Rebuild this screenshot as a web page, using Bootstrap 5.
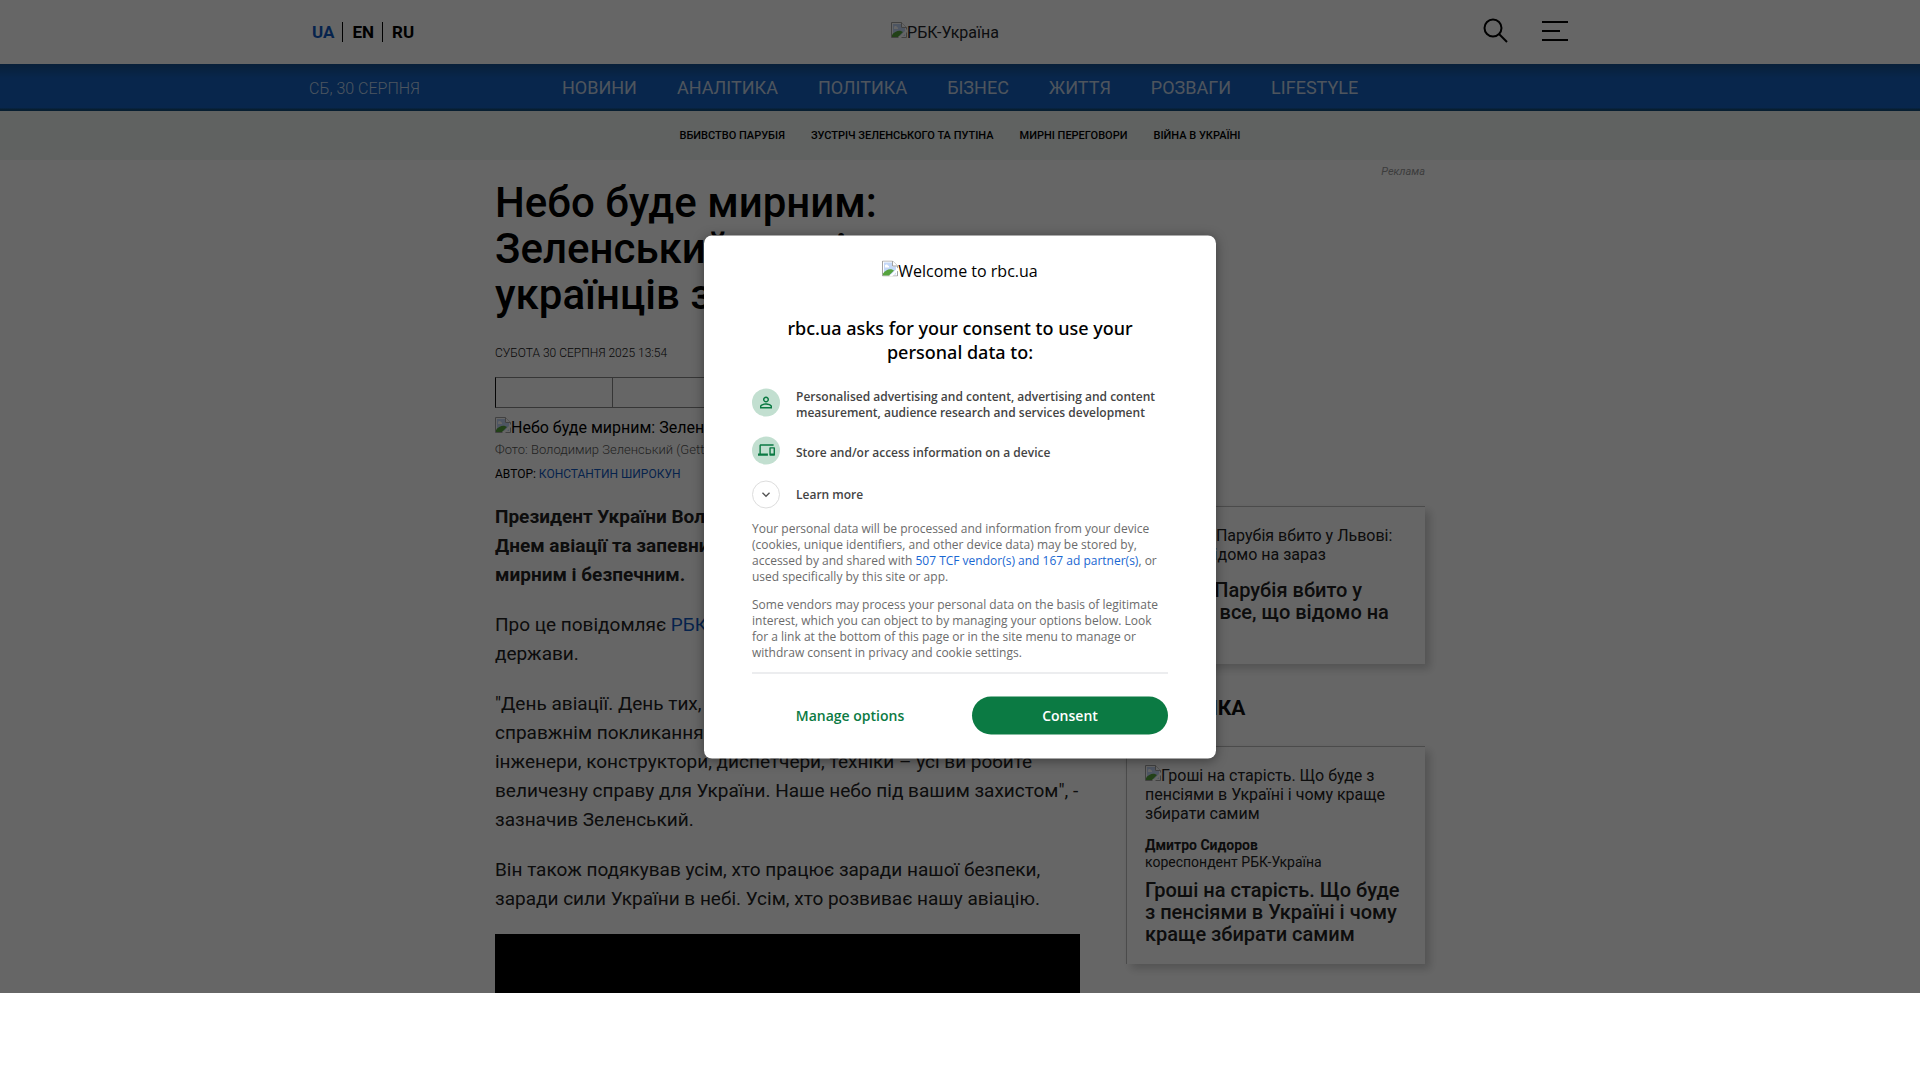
<!DOCTYPE html>
<html lang="uk">
<head>
<meta charset="utf-8">
<meta name="viewport" content="width=device-width, initial-scale=1">
<title>РБК-Україна</title>
<link rel="stylesheet" href="https://cdn.jsdelivr.net/npm/bootstrap@5.3.0/dist/css/bootstrap.min.css">
<style>
  body { font-family: Roboto, sans-serif; color: #000; line-height: 19px; }
  a { text-decoration: none; }
  .site { height: calc(100vh - 87px); overflow: hidden; background: #fff; }
  .shade { position: absolute; inset: 0; background: rgba(0, 0, 0, .6); }
  .wrap { max-width: 1302px; margin: 0 auto; }
  .topbar { height: 64px; padding-right: 30px; grid-template-columns: 1fr auto 1fr; }
  .langs a { font-size: 17px; font-weight: 700; line-height: 20px; color: #000; padding: 0 8px 0 9px; border-left: 1px solid #000; }
  .langs a:first-child { color: #1059c0; border-left: 0; padding-left: 3px; }
  .tools { gap: 34px; padding: 0 13px 3px 0; }
  .plain-btn { background: none; border: 0; padding: 0; }
  .plain-btn svg { display: block; }
  .broken { width: 16px; height: 16px; display: inline-block; vertical-align: baseline; }
  .mainbar { background: linear-gradient(#16508f, #1560bd 14px, #1560bd 44px, #124d7c 45px); height: 47px; }
  .mainbar a { color: #c4d4e8; font-size: 18px; }
  .mainbar nav { gap: 40px; }
  .today { font-size: 16px; font-weight: 300; width: 253px; color: #bfd4ee; padding-top: 1px; }
  .subbar { background: #eff5f3; height: 49px; gap: 26px; }
  .subbar a { color: #000; font-size: 11px; font-weight: 500; }
  .page-cols { max-width: 930px; margin: 0 auto; }
  .story { width: 585px; }
  .story h1 { font-size: 42px; line-height: 46px; font-weight: 500; max-width: 440px; margin: 20px 0 0; }
  .stamp { font-size: 12px; line-height: 16px; color: #111; margin-top: 27px; font-weight: 300; }
  .share { height: 31px; border: 1px solid #888; border-left-color: #111; margin-top: 16px; }
  .share > span { width: 117px; border-right: 1px solid #888; }
  .photo-alt { margin-top: 9px; }
  .photo-note { font-size: 13px; line-height: 16px; font-weight: 300; color: #555; margin-top: 5px; }
  .author { font-size: 12px; line-height: 16px; margin-top: 8px; }
  .author a, .article-text a { color: #1059c0; }
  .article-text { font-size: 19px; line-height: 29px; color: #222; margin-top: 20px; }
  .article-text p { margin: 0 0 21px; }
  .video { height: 330px; background: #000; }
  .side { width: 299px; }
  .promo { color: #999; font-size: 11px; line-height: 16px; font-style: italic; height: 346px; padding-top: 4px; }
  .tile { border: 1px solid #bbb; border-right: 0; border-bottom: 0; box-shadow: 5px 5px 8px rgba(0, 0, 0, .18); padding: 18px 18px 19px; color: #222; }
  .tile h3 { font-size: 20px; line-height: 22px; font-weight: 500; margin: 15px 0 0; }
  .byline { font-size: 14px; line-height: 17px; margin-top: 14px; }
  .byline + h3 { margin-top: 8px; }
  .side h2 { font-size: 21px; line-height: 24px; font-weight: 700; margin: 32px 0 26px; color: #111; }
  .consent { position: absolute; left: 50%; top: 50%; transform: translate(-50%, -50%); width: 512px; background: #fff; border-radius: 8px; padding: 25px 48px 24px; font-family: "Open Sans", sans-serif; box-shadow: 0 2px 12px rgba(0, 0, 0, .4); }
  .consent h2 { font-family: "Noto Sans", "Open Sans", sans-serif; font-size: 18px; line-height: 24px; font-weight: 500; margin: 35px 20px 25px; }
  .purposes { gap: 16px; margin-bottom: 12px; }
  .purposes li, .more { font-size: 12px; line-height: 16px; font-weight: 600; color: #444; gap: 16px; }
  .disc { width: 28px; height: 28px; border-radius: 50%; background: #c2dfd0; flex: none; }
  .disc.hollow { background: #fff; border: 1px solid #ddd; }
  .terms { font-size: 12px; line-height: 16px; color: #6b6b6b; }
  .terms p { margin: 0 0 12px; }
  .terms a { color: #1967d2; }
  .acts { border-top: 1px solid #dadce0; padding-top: 23px; gap: 24px; }
  .acts .btn { flex: 1 1 0; height: 38px; border: 0; border-radius: 19px; font-size: 14px; line-height: 20px; font-weight: 600; padding: 0; }
  .btn-manage { color: #0b7a43; }
  .btn-agree, .btn-agree:hover { color: #fff; background: #0b7a43; }
</style>
<script src="https://cdn.jsdelivr.net/npm/bootstrap@5.3.0/dist/js/bootstrap.bundle.min.js"></script>
</head>
<body>
<svg class="d-none">
  <symbol id="broken" viewBox="0 0 16 16">
    <path d="M.5.5h10l5 5v10H.5z" fill="#fff" stroke="#a3a3a3"/>
    <path d="M2 2h8v4h4v8H2z" fill="#c3d7f7"/>
    <path d="M3 6a1.500 1.500 0 0 1 3-1 1.500 1.500 0 0 1 1 2H3z" fill="#fff"/>
    <path d="M1 15v-2c2-3 6-5 9-4l2 1-5 5z" fill="#56a33e"/>
    <path d="M7 16 16 7v3L10 16z" fill="#fff"/>
    <path d="M10.500.5v5h5" fill="#fff" stroke="#a3a3a3"/>
  </symbol>
</svg>
<div class="site position-relative">
  <header>
    <div class="wrap topbar d-grid align-items-center">
      <nav class="langs d-flex" aria-label="Мова"><a href="#">UA</a><a href="#">EN</a><a href="#">RU</a></nav>
      <a href="#" class="text-body"><svg class="broken"><use href="#broken"/></svg>РБК-Україна</a>
      <div class="tools d-flex align-items-center justify-content-end">
        <button class="plain-btn" aria-label="Пошук"><svg width="25" height="25" viewBox="0 0 25 25" fill="none" stroke="#000" stroke-width="2"><circle cx="10" cy="10" r="8.500"/><path d="m16 16 8 8"/></svg></button>
        <button class="plain-btn" aria-label="Меню"><svg width="26" height="20" viewBox="0 0 26 20" stroke="#000" stroke-width="2"><path d="M0 1h26M0 10h18M0 19h26"/></svg></button>
      </div>
    </div>
    <div class="mainbar">
      <div class="wrap d-flex align-items-center h-100">
        <span class="today">СБ, 30 СЕРПНЯ</span>
        <nav class="d-flex" aria-label="Розділи"><a href="#">НОВИНИ</a><a href="#">АНАЛІТИКА</a><a href="#">ПОЛІТИКА</a><a href="#">БІЗНЕС</a><a href="#">ЖИТТЯ</a><a href="#">РОЗВАГИ</a><a href="#">LIFESTYLE</a></nav>
      </div>
    </div>
    <nav class="subbar d-flex align-items-center justify-content-center" aria-label="Теми"><a href="#">ВБИВСТВО ПАРУБІЯ</a><a href="#">ЗУСТРІЧ ЗЕЛЕНСЬКОГО ТА ПУТІНА</a><a href="#">МИРНІ ПЕРЕГОВОРИ</a><a href="#">ВІЙНА В УКРАЇНІ</a></nav>
  </header>
  <main class="page-cols d-flex justify-content-between">
    <article class="story">
      <h1>Небо буде мирним: Зеленський привітав українців з</h1>
      <div class="stamp">СУБОТА 30 СЕРПНЯ 2025 13:54</div>
      <div class="share d-flex"><span></span><span></span><span></span><span></span></div>
      <div class="photo-alt"><svg class="broken"><use href="#broken"/></svg>Небо буде мирним: Зеленс</div>
      <div class="photo-note">Фото: Володимир Зеленський (Getty</div>
      <div class="author">АВТОР: <a href="#">КОНСТАНТИН ШИРОКУН</a></div>
      <div class="article-text">
        <p class="fw-bold">Президент України Волод<br>Днем авіації та запевнив<br>мирним і безпечним.</p>
        <p>Про це повідомляє <a href="#">РБК-</a><br>держави.</p>
        <p>"День авіації. День тих,<br>справжнім покликанням<br>інженери, конструктори, диспетчери, техніки – усі ви робите величезну справу для України. Наше небо під вашим захистом", - зазначив Зеленський.</p>
        <p>Він також подякував усім, хто працює заради нашої безпеки, заради сили України в небі. Усім, хто розвиває нашу авіацію.</p>
        <div class="video"></div>
      </div>
    </article>
    <aside class="side">
      <div class="promo text-end">Реклама</div>
      <div class="tile">
        <div><svg class="broken"><use href="#broken"/></svg>Андрія Парубія вбито у Львові: все, що відомо на зараз</div>
        <h3>Андрія Парубія вбито у Львові: все, що відомо на зараз</h3>
      </div>
      <h2>АНАЛІТИКА</h2>
      <div class="tile">
        <div><svg class="broken"><use href="#broken"/></svg>Гроші на старість. Що буде з пенсіями в Україні і чому краще збирати самим</div>
        <div class="byline"><strong class="fw-bold d-block">Дмитро Сидоров</strong>кореспондент РБК-Україна</div>
        <h3>Гроші на старість. Що буде з пенсіями в Україні і чому краще збирати самим</h3>
      </div>
    </aside>
  </main>
  <div class="shade"></div>
  <section class="consent" role="dialog" aria-labelledby="ask">
    <div class="text-center"><svg class="broken"><use href="#broken"/></svg>Welcome to rbc.ua</div>
    <h2 id="ask" class="text-center">rbc.ua asks for your consent to use your personal data to:</h2>
    <ul class="purposes list-unstyled d-flex flex-column">
      <li class="d-flex">
        <span class="disc d-flex align-items-center justify-content-center"><svg width="18" height="18" viewBox="0 0 24 24" fill="#0b7a43"><path d="M12 5.900a2.100 2.100 0 1 1 0 4.200 2.100 2.100 0 0 1 0-4.200m0 9c2.970 0 6.100 1.460 6.100 2.100v1.100H5.900V17c0-.64 3.130-2.100 6.100-2.100M12 4C9.790 4 8 5.790 8 8s1.790 4 4 4 4-1.790 4-4-1.790-4-4-4zm0 9c-2.670 0-8 1.340-8 4v3h16v-3c0-2.660-5.330-4-8-4z"/></svg></span>
        <span>Personalised advertising and content, advertising and content measurement, audience research and services development</span>
      </li>
      <li class="d-flex">
        <span class="disc d-flex align-items-center justify-content-center"><svg width="17" height="17" viewBox="0 0 24 24" fill="#0b7a43"><path d="M4 6h18V4H4c-1.100 0-2 .9-2 2v11H0v3h14v-3H4V6zm19 2h-6c-.55 0-1 .45-1 1v10c0 .55.45 1 1 1h6c.55 0 1-.45 1-1V9c0-.55-.45-1-1-1zm-1 9h-4v-7h4v7z"/></svg></span>
        <span class="pt-2">Store and/or access information on a device</span>
      </li>
      <li>
        <button class="plain-btn more d-flex align-items-center"><span class="disc hollow d-flex align-items-center justify-content-center"><svg width="16" height="16" viewBox="0 0 24 24" fill="#555"><path d="M7.410 8.590 12 13.170l4.590-4.580L18 10l-6 6-6-6z"/></svg></span>Learn more</button>
      </li>
    </ul>
    <div class="terms">
      <p>Your personal data will be processed and information from your device (cookies, unique identifiers, and other device data) may be stored by, accessed by and shared with <a href="#">507 TCF vendor(s) and 167 ad partner(s)</a>, or used specifically by this site or app.</p>
      <p>Some vendors may process your personal data on the basis of legitimate interest, which you can object to by managing your options below. Look for a link at the bottom of this page or in the site menu to manage or withdraw consent in privacy and cookie settings.</p>
    </div>
    <div class="acts d-flex"><button class="btn btn-manage">Manage options</button><button class="btn btn-agree">Consent</button></div>
  </section>
</div>
</body>
</html>
